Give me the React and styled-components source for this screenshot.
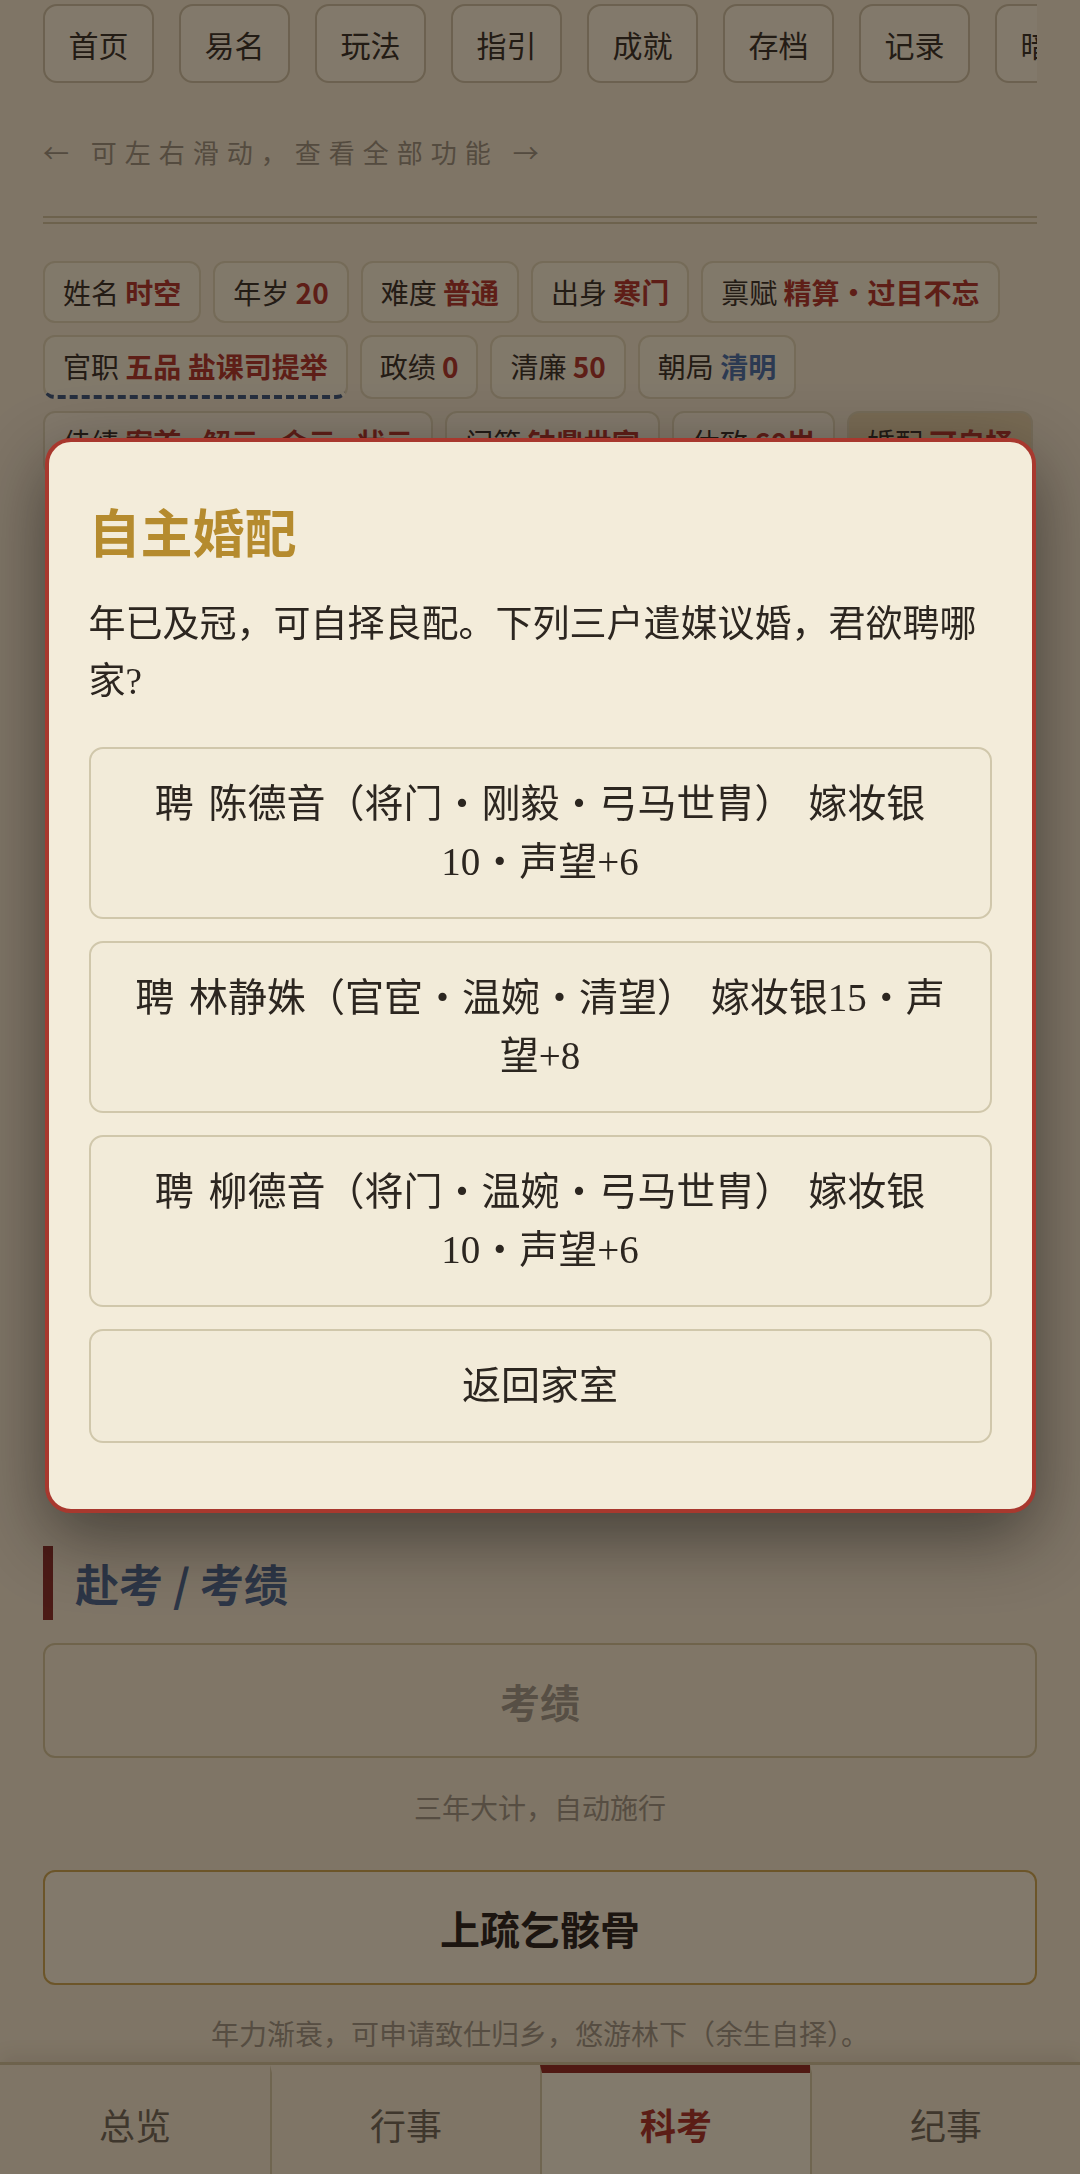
import React from "react";
import styled, { createGlobalStyle } from "styled-components";

const SANS = `"Noto Sans CJK SC", "Liberation Sans", sans-serif`;
const SERIF = `"Liberation Serif", "Noto Sans CJK SC", serif`;

const GlobalStyle = createGlobalStyle`
  html, body {
    margin: 0;
    padding: 0;
  }
  body {
    background: #e6d9c0;
    font-family: ${SANS};
    color: #3a3129;
  }
  * {
    box-sizing: border-box;
  }
`;

const Page = styled.div`
  height: 100vh;
  display: flex;
  flex-direction: column;
  overflow: hidden;
`;

const Main = styled.main`
  flex: 1;
  overflow: hidden;
  padding: 4px 43px 0;
`;

const NavStrip = styled.div`
  display: flex;
  gap: 25px;
  overflow: hidden;
`;

const NavButton = styled.button`
  flex: 0 0 111px;
  height: 79px;
  padding: 0;
  border: 2px solid #c2b497;
  border-radius: 14px;
  background: #ece1ca;
  font: 30px ${SANS};
  color: #3a3129;
  white-space: nowrap;
  overflow: hidden;
`;

const Hint = styled.div`
  margin-top: 50px;
  font-size: 26px;
  line-height: 38px;
  letter-spacing: 8px;
  color: #958a78;
`;

const Divider = styled.div`
  margin-top: 45px;
  height: 8px;
  border-top: 2px solid #c4b592;
  border-bottom: 2px solid #c4b592;
`;

const Chips = styled.div`
  margin-top: 37px;
  display: flex;
  flex-wrap: wrap;
  gap: 12px;
`;

const Chip = styled.div`
  padding: 8px 18px;
  border: 2px solid #d3c6a6;
  border-bottom: ${(p) => (p.$dashed ? "4px dashed #3f5676" : "2px solid #d3c6a6")};
  border-radius: 12px;
  background: ${(p) => (p.$hot ? "#d8c49c" : "#ebe0c9")};
  font-size: 28px;
  line-height: 42px;
  color: #3a3129;
  white-space: nowrap;
`;

const Val = styled.b`
  font-weight: 700;
  color: ${(p) => (p.$tone === "blue" ? "#4b6b9c" : "#a9362c")};
`;

const Sep = styled.span`
  margin: 0 6px;
  font-family: "Liberation Sans", sans-serif;
`;

const Reserved = styled.div`
  height: 1070px;
`;

const SectionTitle = styled.h2`
  margin: 0;
  border-left: 10px solid #86302a;
  padding-left: 22px;
  font-size: 44px;
  line-height: 74px;
  font-weight: 700;
  color: #4c6385;
`;

const ActionButton = styled.button`
  display: block;
  width: 100%;
  height: 115px;
  margin-top: ${(p) => p.$top}px;
  border: 2px solid ${(p) => (p.disabled ? "#c8b88e" : "#c29e4e")};
  border-radius: 12px;
  background: ${(p) => (p.disabled ? "#e8dcc3" : "#ece1ca")};
  font: 700 40px ${SANS};
  color: ${(p) => (p.disabled ? "#9c9282" : "#2c251f")};
`;

const Caption = styled.p`
  margin: ${(p) => p.$top}px 0 0;
  text-align: center;
  font-size: 28px;
  line-height: 36px;
  color: #9a8f7d;
`;

const TabBar = styled.nav`
  flex: 0 0 112px;
  display: grid;
  grid-template-columns: repeat(4, 1fr);
  border-top: 3px solid #c5b690;
  background: #e6d9c0;
  box-shadow: 0 -8px 16px rgba(60, 40, 10, 0.08);
`;

const Tab = styled.div`
  display: flex;
  align-items: center;
  justify-content: center;
  border-left: ${(p) => (p.$first ? "none" : "2px solid #c9bb98")};
  border-top: 8px solid ${(p) => (p.$active ? "#8e2d24" : "transparent")};
  background: ${(p) => (p.$active ? "#ede3cc" : "transparent")};
  font-size: 36px;
  font-weight: ${(p) => (p.$active ? 700 : 400)};
  color: ${(p) => (p.$active ? "#a3332a" : "#6f6555")};
`;

const Overlay = styled.div`
  position: fixed;
  inset: 0;
  background: rgba(10, 5, 0, 0.47);
  display: flex;
  justify-content: center;
  align-items: flex-start;
  padding-top: 438px;
`;

const Dialog = styled.div`
  width: 991px;
  background: #f3ecda;
  border: 4px solid #a8382e;
  border-radius: 26px;
  padding: 56px 40px 66px;
  box-shadow: 0 24px 70px rgba(0, 0, 0, 0.45);
  font-family: ${SERIF};
`;

const DialogTitle = styled.h3`
  margin: 0;
  font-family: ${SANS};
  font-size: 52px;
  line-height: 66px;
  font-weight: 700;
  color: #b58b2e;
`;

const DialogText = styled.p`
  margin: 32px 0 0;
  font-size: 37px;
  line-height: 57px;
  color: #2c2620;
`;

const Options = styled.div`
  margin-top: 37px;
  display: flex;
  flex-direction: column;
  gap: 22px;
`;

const Option = styled.button`
  display: block;
  width: 100%;
  padding: 26px 40px;
  border: 2px solid #d0c7ab;
  border-radius: 14px;
  background: #f2ebd9;
  font: 39px/58px ${SERIF};
  word-spacing: 5px;
  color: #2c2620;
  text-align: center;
`;

const navItems = ["首页", "易名", "玩法", "指引", "成就", "存档", "记录", "暗色"];

const chips = [
  { k: "姓名", v: "时空" },
  { k: "年岁", v: "20" },
  { k: "难度", v: "普通" },
  { k: "出身", v: "寒门" },
  { k: "禀赋", v: "精算・过目不忘" },
  { k: "官职", v: "五品 盐课司提举", dashed: true },
  { k: "政绩", v: "0" },
  { k: "清廉", v: "50" },
  { k: "朝局", v: "清明", tone: "blue" },
  { k: "佳绩", v: "案首·解元·会元·状元" },
  { k: "门第", v: "钟鼎世家" },
  { k: "休致", v: "60岁" },
  { k: "婚配", v: "可自择", hot: true },
];

const matches = [
  "聘 陈德音（将门・刚毅・弓马世胄） 嫁妆银10・声望+6",
  "聘 林静姝（官宦・温婉・清望） 嫁妆银15・声望+8",
  "聘 柳德音（将门・温婉・弓马世胄） 嫁妆银10・声望+6",
  "返回家室",
];

const tabs = ["总览", "行事", "科考", "纪事"];

// "·" in chip values gets a narrow latin dot with a little air on each side
const renderValue = (v) =>
  v.split("·").map((part, i) => (
    <React.Fragment key={i}>
      {i > 0 && <Sep>·</Sep>}
      {part}
    </React.Fragment>
  ));

export default function App() {
  return (
    <Page>
      <GlobalStyle />
      <Main>
        <NavStrip>
          {navItems.map((n) => (
            <NavButton key={n}>{n}</NavButton>
          ))}
        </NavStrip>
        <Hint>← 可左右滑动，查看全部功能 →</Hint>
        <Divider />
        <Chips>
          {chips.map((c) => (
            <Chip key={c.k} $dashed={c.dashed} $hot={c.hot}>
              {c.k} <Val $tone={c.tone}>{renderValue(c.v)}</Val>
            </Chip>
          ))}
        </Chips>
        <Reserved />
        <SectionTitle>赴考 / 考绩</SectionTitle>
        <ActionButton $top={23} disabled>
          考绩
        </ActionButton>
        <Caption $top={31}>三年大计，自动施行</Caption>
        <ActionButton $top={45}>上疏乞骸骨</ActionButton>
        <Caption $top={30}>年力渐衰，可申请致仕归乡，悠游林下（余生自择）。</Caption>
      </Main>
      <TabBar>
        {tabs.map((t, i) => (
          <Tab key={t} $first={i === 0} $active={t === "科考"}>
            {t}
          </Tab>
        ))}
      </TabBar>
      <Overlay>
        <Dialog>
          <DialogTitle>自主婚配</DialogTitle>
          <DialogText>年已及冠，可自择良配。下列三户遣媒议婚，君欲聘哪家?</DialogText>
          <Options>
            {matches.map((m) => (
              <Option key={m}>{m}</Option>
            ))}
          </Options>
        </Dialog>
      </Overlay>
    </Page>
  );
}
